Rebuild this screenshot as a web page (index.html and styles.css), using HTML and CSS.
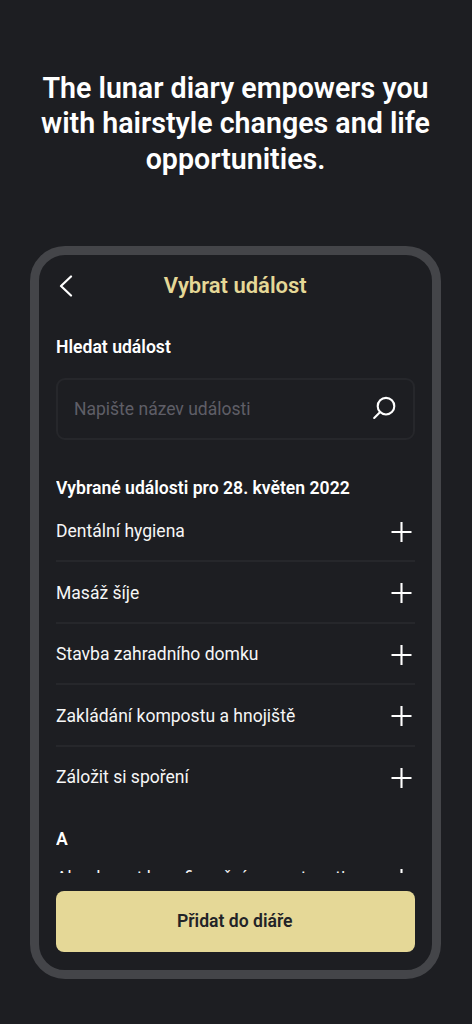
FILE: index.html
```html
<!DOCTYPE html>
<html lang="cs">
<head>
<meta charset="utf-8">
<title>Vybrat událost</title>
<link rel="stylesheet" href="styles.css">
</head>
<body>
<h1 class="headline" lang="en">The lunar diary empowers you<br>with hairstyle changes and life<br>opportunities.</h1>
<main class="phone">
  <header class="topbar">
    <svg class="back" viewBox="0 0 14 22"><path d="M12 1.500 2 11l10 9.500"/></svg>
    <h2 class="title">Vybrat událost</h2>
  </header>
  <div class="content">
    <h3 class="label">Hledat událost</h3>
    <div class="search">
      <span class="placeholder">Napište název události</span>
      <svg class="lens" viewBox="0 0 24 24"><circle cx="14" cy="10.200" r="8.300"/><path d="M8.200 16 2.200 22"/></svg>
    </div>
    <h3 class="label selected">Vybrané události pro 28. květen 2022</h3>
    <ul class="list">
      <li class="row"><span>Dentální hygiena</span><svg class="plus" viewBox="0 0 22 22"><path d="M11.500 1v20M1.500 11h20"/></svg></li>
      <li class="row"><span>Masáž šíje</span><svg class="plus" viewBox="0 0 22 22"><path d="M11.500 1v20M1.500 11h20"/></svg></li>
      <li class="row"><span>Stavba zahradního domku</span><svg class="plus" viewBox="0 0 22 22"><path d="M11.500 1v20M1.500 11h20"/></svg></li>
      <li class="row"><span>Zakládání kompostu a hnojiště</span><svg class="plus" viewBox="0 0 22 22"><path d="M11.500 1v20M1.500 11h20"/></svg></li>
      <li class="row last"><span>Záložit si spoření</span><svg class="plus" viewBox="0 0 22 22"><path d="M11.500 1v20M1.500 11h20"/></svg></li>
    </ul>
    <h3 class="label letter">A</h3>
    <ul class="list next">
      <li class="row last"><span>Absolvovat kurz finanční gramotnosti</span><svg class="plus" viewBox="0 0 22 22"><path d="M11.500 1v20M1.500 11h20"/></svg></li>
    </ul>
  </div>
  <button class="submit">Přidat do diáře</button>
</main>
</body>
</html>
```
FILE: styles.css
```css
* { box-sizing: border-box; }
body {
  margin: 0;
  height: 1024px;
  overflow: hidden;
  background: #1d1e22;
  color: #fff;
  font-family: Roboto, "Liberation Sans", sans-serif;
}
h1, h2, h3, ul { margin: 0; padding: 0; }
svg { fill: none; stroke: #fff; flex: none; }
.headline {
  padding: 71px 1px 0 0;
  height: 246px;
  font-size: 28.600px;
  line-height: 35.300px;
  font-weight: 600;
  text-align: center;
}
.phone {
  width: 411px;
  height: 732.500px;
  margin-left: 30px;
  padding: 0 17.500px 17px 17px;
  border: 9px solid #444549;
  border-radius: 35px;
  display: flex;
  flex-direction: column;
}
.topbar {
  height: 62px;
  display: grid;
  grid-template-columns: 24px 1fr 24px;
  align-items: center;
}
.back { width: 14px; height: 22px; margin-left: 3px; stroke-width: 2.200; stroke-linecap: round; stroke-linejoin: round; }
.title { color: #e5d897; font-size: 22px; line-height: 26px; font-weight: 600; text-align: center; }
.content { height: 556px; overflow: hidden; }
.label { margin-top: 19px; font-size: 17.600px; line-height: 22px; font-weight: 600; }
.search {
  height: 61.500px;
  margin-top: 20px;
  padding: 0 17px 0 16px;
  border: 2px solid #26272b;
  border-radius: 9px;
  display: flex;
  align-items: center;
  justify-content: space-between;
}
.placeholder { color: #5f5e67; font-size: 17.500px; }
.lens { width: 24px; height: 24px; margin-bottom: 1px; stroke-width: 2.100; stroke-linecap: round; }
.selected { margin-top: 37px; }
.list { list-style: none; }
.selected + .list { margin-top: 2px; }
.row {
  height: 61.500px;
  padding-top: 2px;
  border-bottom: 2px solid #26272b;
  display: flex;
  align-items: center;
  justify-content: space-between;
  font-size: 17.550px;
  line-height: 24px;
  color: #f6f6f6;
}
.row.last { border-bottom-color: transparent; }
.plus { width: 22px; height: 22px; margin: 1px 2.500px 0 0; stroke-width: 2.100; }
.letter { margin-top: 20px; }
.next { margin-top: -2.500px; }
.submit {
  height: 61px;
  margin-top: 18px;
  padding: 0 1px 1px 0;
  border: 0;
  border-radius: 8px;
  background: #e5d897;
  color: #222327;
  font: 600 17.600px/22px Roboto, "Liberation Sans", sans-serif;
  flex: none;
}
```
